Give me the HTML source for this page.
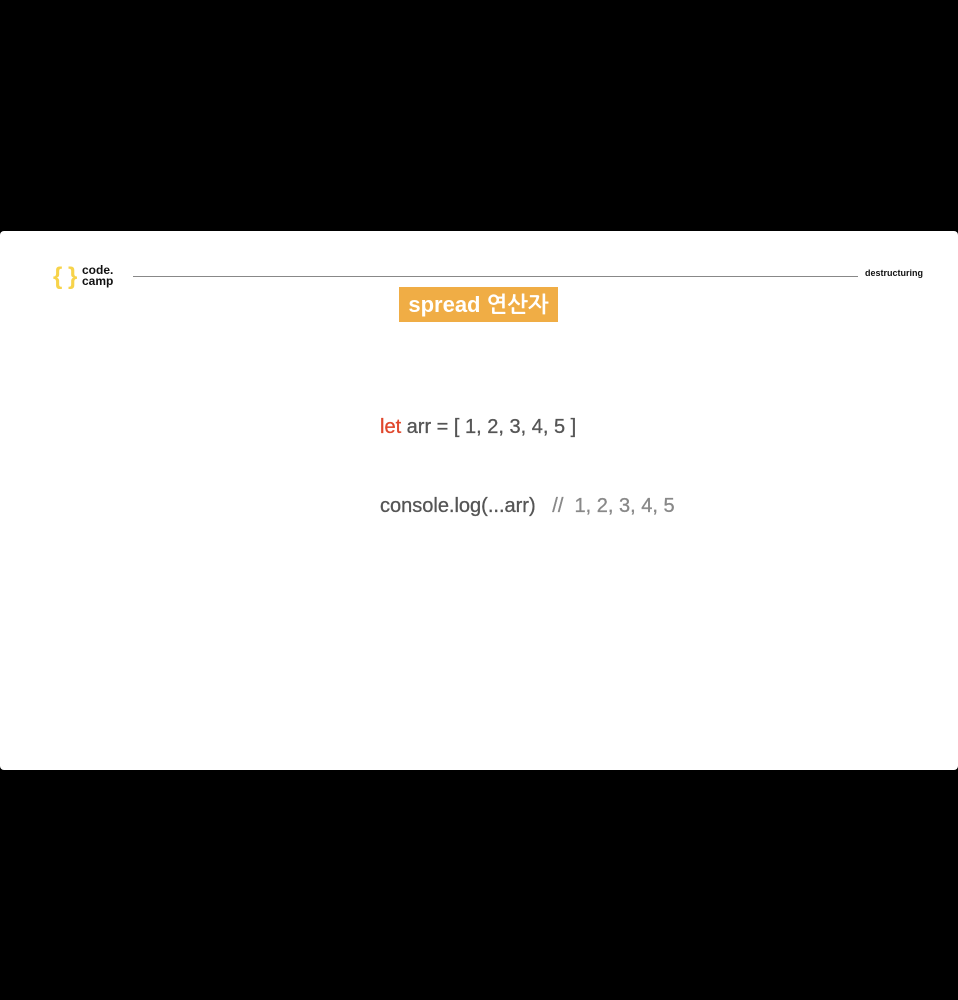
<!DOCTYPE html>
<html><head><meta charset="utf-8"><style>
body{margin:0;width:958px;height:1000px;background:#000;position:relative;overflow:hidden;font-family:"Liberation Sans","NanumGothic",sans-serif}
.slide{position:absolute;left:0;top:231px;width:958px;height:539px;background:#fff;border-radius:4px}
.br{position:absolute;top:263px;color:#f7d34a;font-size:24px;font-weight:bold}
.logo{position:absolute;left:82px;top:265px;font-size:12px;font-weight:bold;line-height:11px;color:#111}
.line{position:absolute;left:133px;top:276px;width:725px;height:1px;background:#888}
.tag{position:absolute;left:865px;top:268px;font-size:9px;font-weight:bold;color:#111}
.title{position:absolute;left:399px;top:287px;width:159px;height:35px;background:#f0ad45;color:#fff;font-size:22px;font-weight:bold;line-height:35px;text-align:center}
.code{position:absolute;left:380px;font-size:20px;color:#555;-webkit-text-stroke:0.3px #555}
</style></head><body>
<div class="slide"></div>
<div class="br" style="left:53px">{</div>
<div class="br" style="left:68px">}</div>
<div class="logo">code.<br>camp</div>
<div class="line"></div>
<div class="tag">destructuring</div>
<div class="title">spread 연산자</div>
<div class="code" style="top:416px"><span style="color:#e0472c;-webkit-text-stroke:0.3px #e0472c">let</span> arr = [ 1, 2, 3, 4, 5 ]</div>
<div class="code" style="top:495px">console.log(...arr) &nbsp;&nbsp;<span style="color:#888;-webkit-text-stroke:0.3px #888">// &nbsp;1, 2, 3, 4, 5</span></div>
</body></html>
